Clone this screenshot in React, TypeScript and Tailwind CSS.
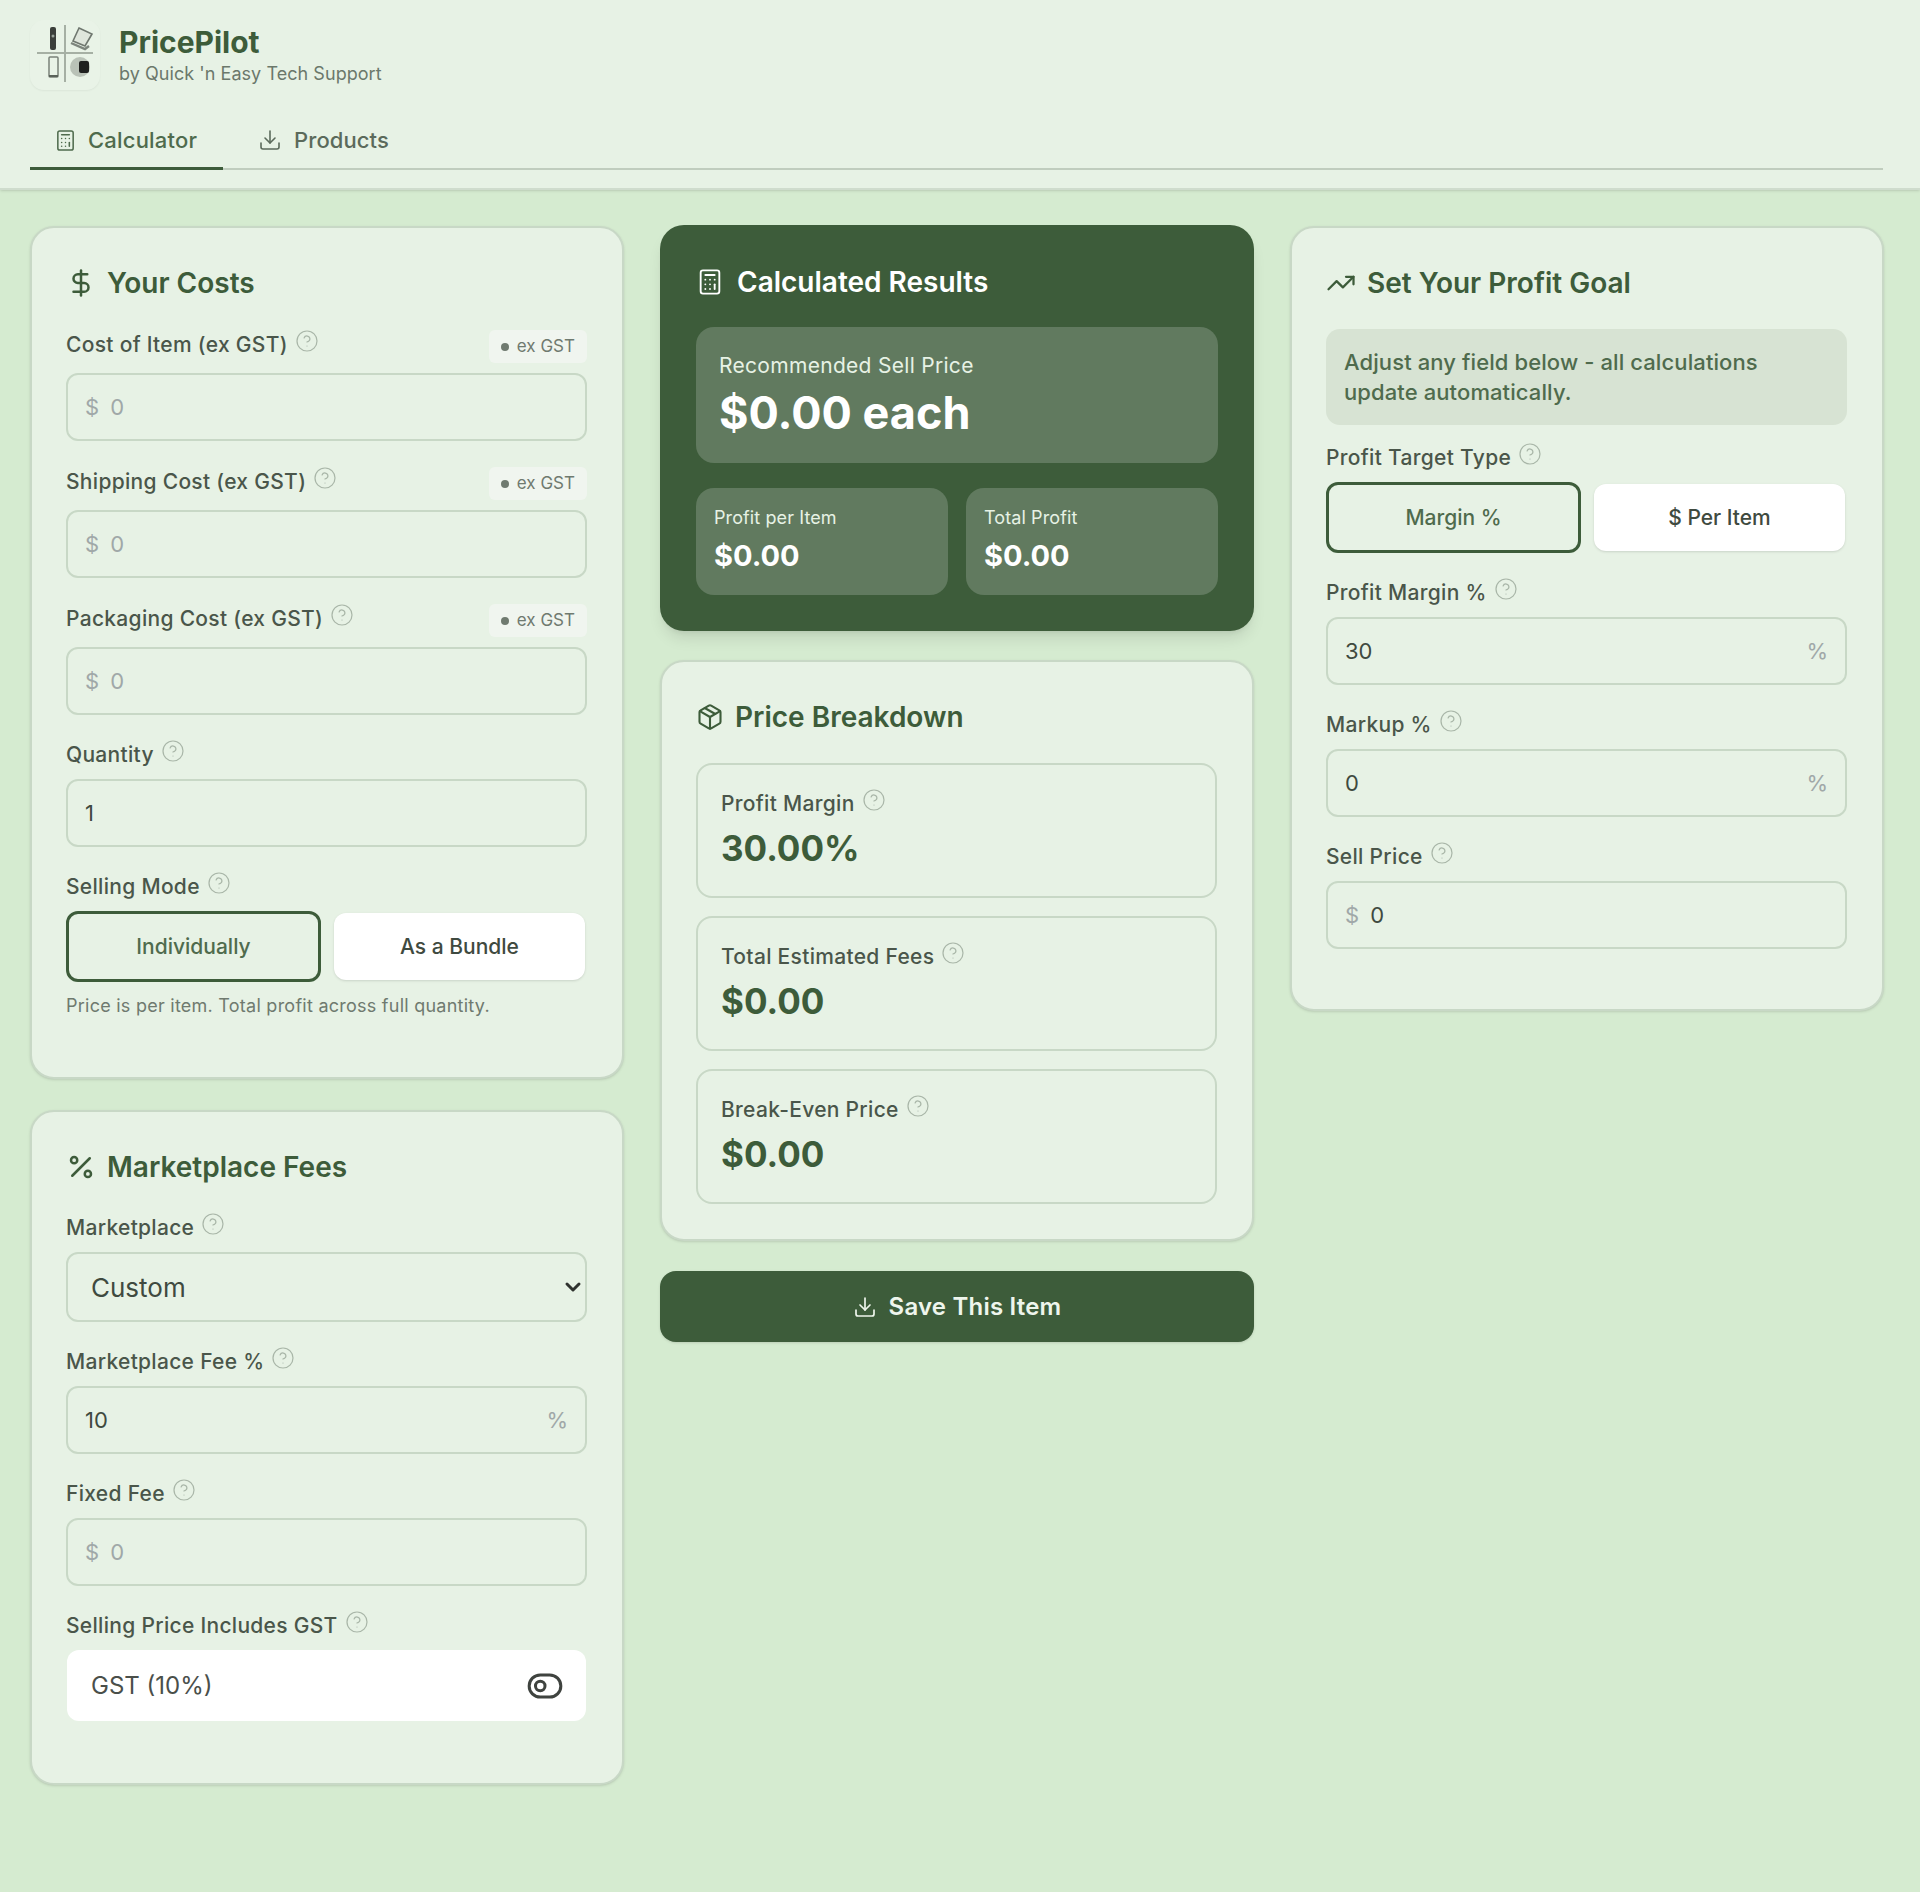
import React from "react";
import {
  Calculator,
  ChevronDown,
  CircleHelp,
  DollarSign,
  Download,
  Package,
  Percent,
  ToggleLeft,
  TrendingUp,
} from "lucide-react";

const Help = () => (
  <CircleHelp size={24} strokeWidth={1.2} className="ml-[7px] -translate-y-[4px] text-[#a9b6a8]" />
);

const Label = ({ text, badge }: { text: string; badge?: boolean }) => (
  <div className={`flex items-center justify-between mb-[10px] ${badge ? "h-[33px]" : "h-[28px]"}`}>
    <div
      className={`flex items-center text-[21px] tracking-[0.3px] font-medium text-[#4a564a] whitespace-nowrap ${
        badge ? "-translate-y-[2px]" : ""
      }`}
    >
      {text}
      <Help />
    </div>
    {badge && (
      <div className="flex items-center gap-[8px] h-[33px] px-[12px] rounded-[6px] bg-[#f0f5ef] text-[17px] text-[#6f7a6f]">
        <span className="w-[8px] h-[8px] rounded-full bg-[#6f7a6f]" />
        ex GST
      </div>
    )}
  </div>
);

const Field = ({
  prefix,
  suffix,
  value,
  placeholder,
}: {
  prefix?: string;
  suffix?: string;
  value?: string;
  placeholder?: string;
}) => (
  <div className="flex items-center h-[68px] px-[17px] rounded-[12px] border-2 border-[#c8d8c6] bg-[#e7f2e5] text-[22px]">
    {prefix && <span className="mr-[11px] text-[#a0a8a8]">{prefix}</span>}
    <input
      className="flex-1 min-w-0 bg-transparent outline-none text-[#3f4a40] placeholder:text-[#a0a8a8]"
      defaultValue={value}
      placeholder={placeholder}
    />
    {suffix && <span className="text-[#a0a8a8]">{suffix}</span>}
  </div>
);

const Toggle = ({ on, off }: { on: string; off: string }) => (
  <div className="flex items-center gap-[13px]">
    <button className="w-[255px] h-[71px] rounded-[12px] border-[3px] border-[#3d5c3a] bg-[#e7f2e5] text-[21px] font-medium text-[#4f6b4d]">
      {on}
    </button>
    <button className="w-[251px] h-[67px] rounded-[12px] bg-white shadow-sm text-[21px] font-medium text-[#3f4a40]">
      {off}
    </button>
  </div>
);

const Card = ({ children, className }: { children: React.ReactNode; className?: string }) => (
  <section className={`pl-[34px] pr-[35px] pt-[34px] rounded-[24px] border-2 border-[#c8d8c6] bg-[#e7f2e5] shadow-sm ${className}`}>
    {children}
  </section>
);

const CardTitle = ({ icon, text }: { icon: React.ReactNode; text: string }) => (
  <h2 className="flex items-center gap-[11px] h-[42px] mb-[26px] text-[28px] font-semibold text-[#3d5c3a]">
    {icon}
    {text}
  </h2>
);

const Stat = ({ label, value }: { label: string; value: string }) => (
  <div className="h-[135px] px-[23px] pt-[24px] rounded-[16px] border-2 border-[#c8d8c6]">
    <div className="flex items-center h-[30px] text-[21px] tracking-[0.3px] font-medium text-[#4a564a]">
      {label}
      <Help />
    </div>
    <div className="mt-[4px] text-[35px] leading-[50px] font-bold text-[#3d5c3a]">{value}</div>
  </div>
);

const Logo = () => (
  <div className="w-[70px] h-[70px] rounded-[14px] bg-[#e9f3e7] shadow-xs">
    <svg viewBox="0 0 70 70" className="w-full h-full blur-[0.4px]">
      <path d="M35 5v57M7 33h56" stroke="#a6b0a4" strokeWidth="2" />
      <rect x="20" y="7" width="6" height="23" rx="2" fill="#3b3f3b" />
      <circle cx="23" cy="16" r="1.5" fill="#9aa29a" />
      <rect x="19" y="37" width="9" height="20" rx="1" fill="none" stroke="#7a827a" strokeWidth="1.5" />
      <path d="M19 56h9" stroke="#5a625a" strokeWidth="2" />
      <path d="M49 8l13 6-7 12-12-5z" fill="#dfe6dc" stroke="#6f776f" strokeWidth="1.6" />
      <path d="M41 23l14 6 4-3" fill="none" stroke="#7d857d" strokeWidth="2.4" />
      <circle cx="50" cy="47" r="10" fill="#b9c2b7" />
      <rect x="49" y="41" width="10" height="12" rx="2" fill="#1f211f" />
    </svg>
  </div>
);

export default function App() {
  return (
    <div className="min-h-[1892px] bg-[#d5ebd0] font-['Inter',sans-serif]">
      <header className="h-[190px] pl-[30px] pr-[37px] pt-[20px] bg-[#e7f2e5] border-b-2 border-[#cfdccd] shadow-sm">
        <div className="flex items-center gap-[19px] h-[70px]">
          <Logo />
          <div>
            <div className="text-[30px] leading-[36px] -translate-y-[1px] font-bold text-[#3d5c3a]">PricePilot</div>
            <div className="text-[18px] leading-[24px] tracking-[0.05px] translate-y-[1px] text-[#6b786b]">by Quick 'n Easy Tech Support</div>
          </div>
        </div>
        <nav className="flex mt-[25px] h-[55px] border-b-2 border-[#c0cdbe]">
          <div className="flex items-center gap-[11px] w-[193px] h-[55px] pb-[2px] pl-[24px] border-b-[3px] border-[#3d5c3a] text-[22px] tracking-[0.2px] font-medium text-[#4f6b4d]">
            <Calculator size={23} strokeWidth={1.6} />
            Calculator
          </div>
          <div className="flex items-center gap-[12px] h-[55px] pb-[2px] pl-[35px] border-b-[3px] border-transparent text-[22px] tracking-[0.1px] font-medium text-[#5b6a5b]">
            <Download size={24} strokeWidth={1.6} />
            Products
          </div>
        </nav>
      </header>

      <main className="grid grid-cols-[594px_594px_594px] gap-x-[36px] pl-[30px] pt-[36px]">
        <div className="flex flex-col gap-[31px]">
          <Card className="h-[853px]">
            <CardTitle icon={<DollarSign size={30} strokeWidth={2} />} text="Your Costs" />
            <div className="flex flex-col gap-[26px]">
              <div>
                <Label text="Cost of Item (ex GST)" badge />
                <Field prefix="$" placeholder="0" />
              </div>
              <div>
                <Label text="Shipping Cost (ex GST)" badge />
                <Field prefix="$" placeholder="0" />
              </div>
              <div>
                <Label text="Packaging Cost (ex GST)" badge />
                <Field prefix="$" placeholder="0" />
              </div>
              <div>
                <Label text="Quantity" />
                <Field value="1" />
              </div>
              <div>
                <Label text="Selling Mode" />
                <Toggle on="Individually" off="As a Bundle" />
                <p className="mt-[14px] text-[18px] tracking-[0.25px] leading-[20px] text-[#6f7a6f]">
                  Price is per item. Total profit across full quantity.
                </p>
              </div>
            </div>
          </Card>

          <Card className="h-[675px]">
            <CardTitle icon={<Percent size={30} strokeWidth={2} />} text="Marketplace Fees" />
            <div className="flex flex-col gap-[26px]">
              <div>
                <Label text="Marketplace" />
                <div className="relative">
                  <select
                    defaultValue="Custom"
                    className="w-full h-[70px] pl-[23px] pr-[8px] appearance-none rounded-[12px] border-2 border-[#c8d8c6] bg-[#e7f2e5] text-[26px] text-[#3f4a40]"
                  >
                    <option>Custom</option>
                  </select>
                  <ChevronDown size={24} strokeWidth={3} className="absolute right-[2px] top-[23px] text-[#2f332f]" />
                </div>
              </div>
              <div>
                <Label text="Marketplace Fee %" />
                <Field value="10" suffix="%" />
              </div>
              <div>
                <Label text="Fixed Fee" />
                <Field prefix="$" placeholder="0" />
              </div>
              <div>
                <Label text="Selling Price Includes GST" />
                <div className="flex items-center justify-between h-[71px] mt-[2px] mx-[1px] pl-[24px] pr-[22px] rounded-[12px] bg-white text-[24px] text-[#4a4f4a]">
                  GST (10%)
                  <ToggleLeft size={38} strokeWidth={1.9} className="text-[#3f433f]" />
                </div>
              </div>
            </div>
          </Card>
        </div>

        <div className="flex flex-col">
          <section className="-mt-[1px] h-[406px] px-[36px] pt-[36px] rounded-[24px] bg-[#3d5c3a] shadow-lg text-white">
            <h2 className="flex items-center gap-[13px] h-[42px] mb-[24px] text-[28px] font-semibold">
              <Calculator size={28} strokeWidth={1.6} />
              Calculated Results
            </h2>
            <div className="h-[136px] px-[23px] pt-[25px] rounded-[18px] bg-[#617a5f]">
              <div className="text-[21px] tracking-[0.3px] leading-[28px] text-[#e7f2e5]">Recommended Sell Price</div>
              <div className="mt-[4px] text-[45px] leading-[58px] font-bold">$0.00 each</div>
            </div>
            <div className="grid grid-cols-2 gap-[18px] mt-[25px]">
              <div className="h-[107px] px-[18px] pt-[17px] rounded-[18px] bg-[#617a5f]">
                <div className="text-[18px] tracking-[0.1px] leading-[26px] text-[#e7f2e5]">Profit per Item</div>
                <div className="mt-[6px] text-[29px] leading-[38px] font-bold">$0.00</div>
              </div>
              <div className="h-[107px] px-[18px] pt-[17px] rounded-[18px] bg-[#617a5f]">
                <div className="text-[18px] tracking-[0.1px] leading-[26px] text-[#e7f2e5]">Total Profit</div>
                <div className="mt-[6px] text-[29px] leading-[38px] font-bold">$0.00</div>
              </div>
            </div>
          </section>

          <Card className="mt-[29px] h-[581px]">
            <CardTitle icon={<Package size={28} strokeWidth={1.8} />} text="Price Breakdown" />
            <div className="flex flex-col gap-[18px] -mt-[1px]">
              <Stat label="Profit Margin" value="30.00%" />
              <Stat label="Total Estimated Fees" value="$0.00" />
              <Stat label="Break-Even Price" value="$0.00" />
            </div>
          </Card>

          <button className="flex items-center justify-center gap-[12px] mt-[30px] h-[71px] rounded-[16px] bg-[#3d5c3a] shadow-sm text-[24px] tracking-[0.2px] font-semibold text-[#eef5ec]">
            <Download size={24} strokeWidth={1.7} />
            Save This Item
          </button>
        </div>

        <div>
          <Card className="h-[785px]">
            <CardTitle icon={<TrendingUp size={30} strokeWidth={1.8} />} text="Set Your Profit Goal" />
            <div className="h-[96px] -mt-[1px] px-[18px] py-[18px] rounded-[14px] bg-[#d7e3d3] text-[22px] tracking-[0.1px] leading-[30px] font-medium text-[#4f6b4d]">
              Adjust any field below - all calculations
              <br />
              update automatically.
            </div>
            <div className="flex flex-col gap-[26px] mt-[19px]">
              <div>
                <Label text="Profit Target Type" />
                <Toggle on="Margin %" off="$ Per Item" />
              </div>
              <div>
                <Label text="Profit Margin %" />
                <Field value="30" suffix="%" />
              </div>
              <div>
                <Label text="Markup %" />
                <Field value="0" suffix="%" />
              </div>
              <div>
                <Label text="Sell Price" />
                <Field prefix="$" value="0" />
              </div>
            </div>
          </Card>
        </div>
      </main>
    </div>
  );
}
